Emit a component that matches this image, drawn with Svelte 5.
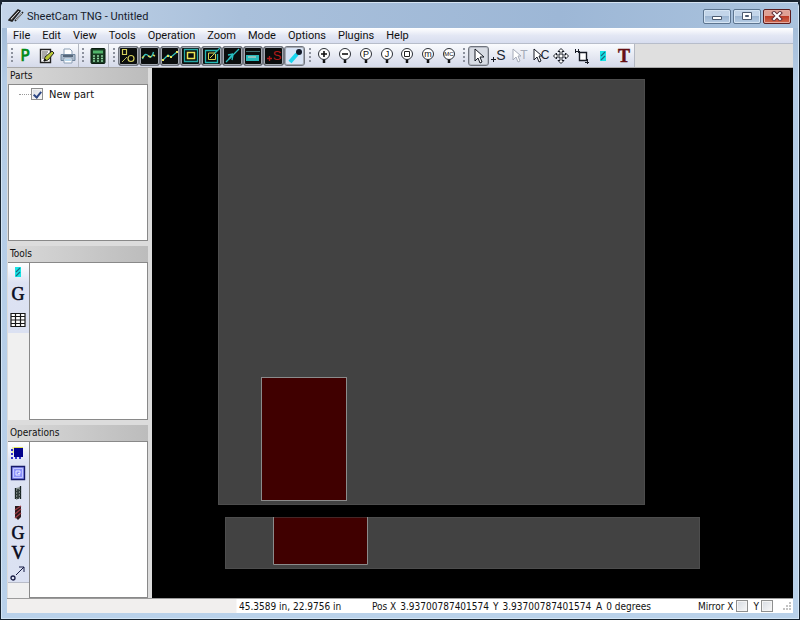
<script>
  let mirrorX = $state(false);
  let mirrorY = $state(false);
  let partOn = $state(true);
  let mode = $state('select');

  const menus = ['File', 'Edit', 'View', 'Tools', 'Operation', 'Zoom', 'Mode', 'Options', 'Plugins', 'Help'];

  const views = $state([
    { name: 'shapes', on: true },
    { name: 'path', on: true },
    { name: 'segments', on: true },
    { name: 'outline', on: true },
    { name: 'contour', on: true },
    { name: 'rapid', on: true },
    { name: 'material', on: true },
    { name: 'start', on: true },
    { name: 'torch', on: true },
  ]);

  const zooms = [
    { name: 'Zoom in', glyph: '+' },
    { name: 'Zoom out', glyph: '−' },
    { name: 'Zoom to part', glyph: 'P' },
    { name: 'Zoom to job', glyph: 'J' },
    { name: 'Zoom to window', glyph: '' },
    { name: 'Zoom to machine', glyph: 'm' },
    { name: 'Zoom to cut', glyph: 'MC' },
  ];

  const modes = ['select', 'startpoint', 'tabs', 'contours', 'move', 'nest', 'tool', 'text'];
  const toolButtons = ['tool', 'code', 'table'];
  const operationButtons = ['offset', 'pocket', 'drill', 'tap', 'code', 'vcarve', 'move-to'];
</script>

{#snippet icon(name)}
  <svg class="icon" width="18" height="18" viewBox="0 0 18 18" fill="none" aria-hidden="true">
    {#if name === 'post'}
      <text x="8" y="14" text-anchor="middle" font-family="DejaVu Sans, sans-serif" font-size="15" fill="#008a18" stroke="#008a18" stroke-width=".7">P</text>
    {:else if name === 'notes'}
      <path d="M2.500 2.500h10v13h-10z" fill="#fff" stroke="#222" stroke-width="1.400" />
      <path d="M4 5h6M4 7h5M4 9h4M4 11h2" stroke="#555" />
      <path d="M6 14l1-4 7-6 2 2-6 7z" fill="#b8c735" stroke="#222" />
      <path d="M6 14l2-1-1-1z" fill="#111" stroke="#111" />
    {:else if name === 'print'}
      <path d="M5 7V2h6l2 2v3" fill="#fff" stroke="#8b9fb5" />
      <path d="M2 7.500h14v6H2z" fill="#aab9ca" stroke="#71869d" />
      <path d="M4 9h10" stroke="#56677a" stroke-width="2" />
      <path d="M5 11h8v5H5z" fill="#fff" stroke="#8b9fb5" />
      <path d="M6 13h6" stroke="#6aabd5" />
    {:else if name === 'calc'}
      <rect x="2" y="1.500" width="14" height="15" rx="1" fill="#183a22" stroke="#0b1d10" />
      <path d="M4 3.500h10v3H4z" fill="#51b36a" />
      <path d="M4 9h2m2 0h2m2 0h2M4 11.500h2m2 0h2m2 0h2M4 14h2m2 0h2m2 0h2" stroke="#91d7a4" stroke-width="1.500" />
    {:else if name === 'shapes'}
      <path d="M3.500 2.500h4v5h-4z" stroke="#d5d05b" stroke-width="1.200" />
      <circle cx="12" cy="11.500" r="3" stroke="#d5d05b" stroke-width="1.200" />
      <path d="M3 15l5-5" stroke="#b5b45b" />
    {:else if name === 'path'}
      <path d="M2.500 12c2-6 4-5 6-3s4 1 5-4" stroke="#37c4bd" stroke-width="1.300" />
      <path d="M2 11l2-2M8 9l3 1M13 8l2 1" stroke="#d7d35a" stroke-width="1.400" />
    {:else if name === 'segments'}
      <path d="M2 13l5-5 3 2 6-5" stroke="#37c4bd" stroke-width="1.300" />
      <path d="M1 13h2M6 9h2m1 1h2m4-5h2" stroke="#e7e35a" stroke-width="2" />
    {:else if name === 'outline'}
      <path d="M2.500 2.500h13v12h-13z" stroke="#25a7a5" stroke-width="1.300" />
      <path d="M5.500 5.500h7v6h-7z" stroke="#ece353" stroke-width="1.500" />
    {:else if name === 'contour'}
      <path d="M14 3.500H2.500v12h12V7M11 7l6-6" stroke="#25b7b5" stroke-width="1.300" />
      <path d="M12 6H5.500v6.500h7V7M7 11l4-4" stroke="#d7d052" />
    {:else if name === 'rapid'}
      <path d="M3 15L16 2M5 8l5-1M10 8l-1 5" stroke="#28bec0" stroke-width="1.300" />
      <path d="M6 12l4-5" stroke="#28bec0" stroke-width="2" />
    {:else if name === 'material'}
      <path d="M2 4.500h14" stroke="#3f6e70" />
      <path d="M2 8h13v6H2z" fill="#27b9ba" />
      <path d="M4 9h8v2H4z" fill="#8ac4bd" />
    {:else if name === 'start'}
      <path d="M2 11.500h5M4.500 9v5" stroke="#b31919" stroke-width="1.300" />
      <text x="12" y="13" text-anchor="middle" font-family="Liberation Sans, sans-serif" font-size="13" fill="#b31919">S</text>
    {:else if name === 'torch'}
      <path d="M4 15l7-8" stroke="#19d5ee" stroke-width="4" />
      <circle cx="13" cy="5" r="3" fill="#111827" />
    {:else if name === 'select' || name === 'tabs' || name === 'contours'}
      <path
        d={name === 'select' ? 'M6 2v12l3-3 2 5 2-1-2-5h4z' : 'M2 2v11l3-3 2 5 2-1-2-5h3z'}
        fill="#fff"
        stroke={name === 'tabs' ? '#a5abb8' : '#171b24'}
      />
      {#if name !== 'select'}
        <text x="13" y="12" text-anchor="middle" font-family="Liberation Sans, sans-serif" font-size="12" fill={name === 'tabs' ? '#a5abb8' : '#202632'}>{name === 'tabs' ? 'T' : 'C'}</text>
      {/if}
    {:else if name === 'startpoint'}
      <path d="M1 12.500h5M3.500 10v5" stroke="#171b24" />
      <text x="11" y="13" text-anchor="middle" font-family="Liberation Sans, sans-serif" font-size="14" fill="#202632">S</text>
    {:else if name === 'move'}
      <path d="M9 1.500l3 3h-2v3.500h3.500V6l3 3-3 3v-2H10v3.500h2l-3 3-3-3h2V10H4.500v2l-3-3 3-3v2H8V4.500H6z" fill="#fff" stroke="#171b24" />
    {:else if name === 'nest'}
      <path d="M6.500 5.500h7v8h-7z" fill="#fff" stroke="#171b24" stroke-width="1.400" />
      <path d="M2 4.500h5M5.500 2v4M2.500 2v4M12 15.500h4M14.500 12v5" stroke="#171b24" />
    {:else if name === 'tool'}
      <path d="M6 4h6v10H6z" fill="#16e3e5" />
      <path d="M7 9l4-4M7 13l4-4" stroke="#176b80" stroke-width="1.200" />
    {:else if name === 'text'}
      <text x="9" y="15" text-anchor="middle" font-family="Liberation Serif, serif" font-size="18" font-weight="700" fill="#651014" stroke="#651014" stroke-width=".5">T</text>
    {:else if name === 'code' || name === 'vcarve'}
      <text x="9" y="15" text-anchor="middle" font-family="Liberation Serif, serif" font-size="18" fill="#080a20" stroke="#080a20" stroke-width=".6">{name === 'code' ? 'G' : 'V'}</text>
    {:else if name === 'table'}
      <path d="M2 2.500h14v13H2zM2 5.500h14M2 9h14M2 12.500h14M6.500 3v12M11.500 3v12" fill="#fff" stroke="#181818" stroke-width="1.200" />
    {:else if name === 'offset'}
      <path d="M5 4h9v9H5z" fill="#02028c" />
      <path d="M4 3v6M5 3.500h9" stroke="#e4e45a" />
      <path d="M3 5v9h11" stroke="#3434cc" stroke-width="2" stroke-dasharray="2 2" />
    {:else if name === 'pocket'}
      <path d="M2.500 2.500h13v13h-13z" fill="#8c92fa" stroke="#161a68" stroke-width="1.400" />
      <path d="M4.500 4.500h9v9h-9z" stroke="#c3c8ff" />
      <path d="M11 11H7V7h4v2.500H9" stroke="#e8eaff" />
    {:else if name === 'drill'}
      <path d="M7 4l4-1v11l-4 2z" fill="#87918f" />
      <path d="M6.500 4v11M11.500 2v13M9 5v10" stroke="#152020" stroke-width="1.300" />
      <path d="M6 8l6-2M6 11l6-2M6 14l6-2" stroke="#2c3838" />
    {:else if name === 'tap'}
      <path d="M6 2h6v11l-3 3-3-3z" fill="#28181c" />
      <path d="M6 6l6-4M6 10l6-5M6 14l6-5" stroke="#9a3944" stroke-width="1.400" />
    {:else if name === 'move-to'}
      <circle cx="4" cy="14" r="2" stroke="#171b44" stroke-width="1.300" />
      <path d="M7 11l8-8M10 3h5v5" stroke="#171b44" />
    {/if}
  </svg>
{/snippet}

{#snippet zoomIcon(glyph)}
  <svg class="icon" width="18" height="18" viewBox="0 0 18 18" fill="none" aria-hidden="true">
    <path d="M9 12v4" stroke="#111" stroke-width="2.500" />
    <circle cx="9" cy="7" r="5.500" fill="#fff" stroke="#2a2e36" />
    {#if glyph === '+'}
      <path d="M6 7h6M9 4v6" stroke="#111" stroke-width="1.600" />
    {:else if glyph === '−'}
      <path d="M6 7h6" stroke="#111" stroke-width="1.600" />
    {:else if glyph === ''}
      <path d="M6.500 4.500h5v5h-5z" stroke="#222" />
    {:else}
      <text x="9" y={glyph === 'MC' ? 9 : 10} text-anchor="middle" font-family="Liberation Sans, sans-serif" font-size={glyph === 'MC' ? 6 : 9} fill="#111">{glyph}</text>
    {/if}
  </svg>
{/snippet}

<div class="window">
  <header class="title">
    <svg width="16" height="16" viewBox="0 0 16 16" aria-hidden="true">
      <path d="M1 13L10 3l2 1L4 14zM7 14l8-9" fill="#777" stroke="#222" stroke-width="1.500" />
      <path d="M3 12l8-8m-3 9l6-7" stroke="#ccc" />
    </svg>
    <h1>SheetCam TNG - Untitled</h1>
    <div class="caption-buttons">
      <button aria-label="Minimize">
        <svg width="12" height="10" viewBox="0 0 12 10"><path d="M1.500 5.500h9v3h-9z" fill="#fff" stroke="#4c5b70" /></svg>
      </button>
      <button aria-label="Maximize">
        <svg width="12" height="10" viewBox="0 0 12 10"><path d="M1.500 1.500h9v7h-9z" fill="#fff" stroke="#4c5b70" /><path d="M4.500 4.500h3v1h-3z" fill="#8ba6c4" stroke="#4c5b70" /></svg>
      </button>
      <button class="close" aria-label="Close">
        <svg width="12" height="10" viewBox="0 0 12 10"><path d="M3 2l6 6m0-6L3 8" stroke="#62303a" stroke-width="4" stroke-linecap="square" /><path d="M3 2l6 6m0-6L3 8" stroke="#fff" stroke-width="2" stroke-linecap="square" /></svg>
      </button>
    </div>
  </header>

  <div class="client">
    <nav>
      {#each menus as menu}
        <button>{menu}</button>
      {/each}
    </nav>

    <div class="toolbars">
      <div class="bar file">
        <span class="grip"></span>
        <button aria-label="Run post processor">{@render icon('post')}</button>
        <button aria-label="Notes">{@render icon('notes')}</button>
        <button aria-label="Print">{@render icon('print')}</button>
      </div>
      <div class="bar calc">
        <span class="grip"></span>
        <button aria-label="Calculator">{@render icon('calc')}</button>
      </div>
      <div class="bar views">
        <span class="grip"></span>
        {#each views as view}
          <button
            class="toggle"
            class:light={view.name === 'torch'}
            class:off={!view.on}
            aria-label={view.name}
            aria-pressed={view.on}
            onclick={() => (view.on = !view.on)}
          >{@render icon(view.name)}</button>
        {/each}
      </div>
      <div class="bar zooms">
        <span class="grip"></span>
        {#each zooms as zoom}
          <button aria-label={zoom.name}>{@render zoomIcon(zoom.glyph)}</button>
        {/each}
      </div>
      <div class="bar modes">
        <span class="grip"></span>
        {#each modes as item}
          <button class:active={mode === item} aria-label={item} onclick={() => (mode = item)}>{@render icon(item)}</button>
        {/each}
      </div>
    </div>

    <main>
      <aside>
        <section>
          <h2>Parts</h2>
          <div class="list">
            <label class="part">
              <span class="branch"></span>
              <input type="checkbox" bind:checked={partOn} />
              New part
            </label>
          </div>
        </section>
        <section>
          <h2>Tools</h2>
          <div class="split">
            <div class="rail">
              <div class="strip tools">
                {#each toolButtons as name}
                  <button aria-label={name}>{@render icon(name)}</button>
                {/each}
              </div>
            </div>
            <div class="list"></div>
          </div>
        </section>
        <section>
          <h2>Operations</h2>
          <div class="split">
            <div class="rail">
              <div class="strip operations">
                {#each operationButtons as name}
                  <button aria-label={name}>{@render icon(name)}</button>
                {/each}
              </div>
            </div>
            <div class="list"></div>
          </div>
        </section>
      </aside>

      <div class="canvas">
        <svg viewBox="0 0 641 530" preserveAspectRatio="xMinYMin meet" role="img" aria-label="Machine table, top and side view">
          <rect x="66.500" y="11.500" width="426" height="425" fill="#424242" stroke="#4d4d4d" />
          <rect x="109.500" y="309.500" width="85" height="123" fill="#400000" stroke="#8b8b8b" />
          <rect x="73.500" y="449.500" width="474" height="51" fill="#424242" stroke="#4d4d4d" />
          <rect x="121.500" y="449.500" width="94" height="47" fill="#400000" />
          <path d="M121.500 449v47.500h94V449" fill="none" stroke="#8b8b8b" />
        </svg>
      </div>
    </main>

    <footer>
      <span class="cursor">45.3589 in, 22.9756 in</span>
      <span class="pos-x"><span>Pos X</span> <output>3.93700787401574</output></span>
      <span class="pos-y"><span>Y</span> <output>3.93700787401574</output></span>
      <span class="angle"><span>A</span> <output>0 degrees</output></span>
      <span class="mirror">
        <label>Mirror X <input type="checkbox" bind:checked={mirrorX} /></label>
        <label>Y <input type="checkbox" bind:checked={mirrorY} /></label>
      </span>
      <svg class="size-grip" width="9" height="9" viewBox="0 0 9 9" aria-hidden="true">
        <path d="M7 1h2M4 4h2m1 0h2M1 7h2m1 0h2m1 0h2" stroke="#c3c3c3" stroke-width="2" />
      </svg>
    </footer>
  </div>
</div>

<style>
  :global(body) {
    margin: 0;
    background: #1c2733;
  }

  .window {
    box-sizing: border-box;
    display: flex;
    flex-direction: column;
    height: 100vh;
    padding: 0 6px 6px;
    border: 1px solid #17232f;
    border-top-width: 2px;
    border-radius: 6px 6px 0 0;
    background: linear-gradient(#9db6d3, #b4cce6 80px, #b9d1ea);
    box-shadow: inset 0 0 0 1px #d3e5f5;
    font-family: "DejaVu Sans Condensed", "DejaVu Sans", sans-serif;
    font-size: 10px;
    color: #111;
  }

  button {
    margin: 0;
    padding: 0;
    border: 0;
    background: none;
    font: inherit;
    color: inherit;
  }

  input {
    margin: 0;
  }

  .title {
    display: flex;
    align-items: center;
    height: 26px;
    flex: none;
    margin: 0 -5px;
    padding: 0 6px;
    background: linear-gradient(90deg, #c4d5e9, #a9c0db 30%, #9db7d6 70%, #aac3de);
    box-shadow: inset 0 1px #d5e3f2;
  }

  h1 {
    margin: 3px 0 0 3px;
    font-family: Roboto, sans-serif;
    font-size: 11px;
    font-weight: 400;
    line-height: 16px;
    color: #16202c;
  }

  .caption-buttons {
    display: flex;
    gap: 2px;
    margin: 2px 1px 0 auto;
  }

  .caption-buttons button {
    box-sizing: border-box;
    display: grid;
    place-items: center;
    width: 28px;
    height: 15px;
    border: 1px solid #5d7590;
    border-radius: 2px;
    background: linear-gradient(#c3d5e9 45%, #9db6d2 50%, #b7cee6);
    box-shadow: inset 0 0 0 1px #d5e4f3;
  }

  .caption-buttons .close {
    border-color: #5c1e20;
    background: linear-gradient(#dfa094 45%, #bd3b26 50%, #cf6a50);
    box-shadow: inset 0 0 0 1px #e4aaa0;
  }

  .client {
    display: flex;
    flex-direction: column;
    flex: 1;
    min-height: 0;
    background: #f0f0f0;
  }

  nav {
    display: flex;
    flex: none;
    height: 15px;
    border-bottom: 1px solid #b7bdca;
    background: linear-gradient(#fff, #e3e7f4 50%, #d7ddef);
  }

  nav button {
    padding: 0 6px;
    font-family: Roboto, sans-serif;
    font-size: 11px;
    line-height: 16px;
  }

  .toolbars {
    display: flex;
    flex: none;
    height: 23px;
    padding-left: 1px;
    background: #dfdfdf;
    border-bottom: 1px solid #a8a8a8;
  }

  .bar {
    box-sizing: border-box;
    display: flex;
    align-items: center;
    border-right: 1px solid #b4b8c2;
    background: linear-gradient(#fafbfe, #e5e8f2 55%, #d5daea);
  }

  .bar.file { width: 71px; }
  .bar.calc { width: 30px; }
  .bar.views { width: 197px; padding-left: 1px; }
  .bar.zooms { width: 154px; }
  .bar.modes { width: 175px; }

  .bar.views, .bar.zooms {
    border-right-color: transparent;
  }

  .grip {
    flex: none;
    width: 2px;
    height: 15px;
    margin: 0 3px;
    background: repeating-linear-gradient(#8d929e 0 2px, transparent 2px 4px);
  }

  .bar button {
    box-sizing: border-box;
    display: grid;
    place-items: center;
    flex: 1;
    min-width: 0;
    height: 20px;
    border: 1px solid transparent;
    border-radius: 3px;
  }

  .bar .toggle {
    border: 1px solid #70757f;
    background: #0a0d0d;
    box-shadow: inset 0 0 0 1px #a4a9b2;
  }

  .bar .toggle.light {
    background: #d7e3f5;
  }

  .bar .toggle.off {
    opacity: 0.5;
  }

  .bar .active {
    border-color: #6f747e;
    background: #d8dce4;
    box-shadow: inset 0 0 0 1px #b6bac4;
  }

  .icon {
    display: block;
    overflow: visible;
  }

  main {
    display: flex;
    flex: 1;
    min-height: 0;
    background: #dcdcdc;
  }

  aside {
    display: grid;
    grid-template-rows: repeat(3, 1fr);
    gap: 5px;
    flex: none;
    width: 140px;
    margin: 0 4px 0 1px;
  }

  section {
    display: flex;
    flex-direction: column;
    min-height: 0;
  }

  h2 {
    flex: none;
    height: 16px;
    margin: 0;
    padding-left: 2px;
    background: linear-gradient(90deg, #d9d9d9, #bcbcbc);
    font-size: 10px;
    font-weight: 400;
    line-height: 16px;
  }

  .split {
    display: flex;
    flex: 1;
    min-height: 0;
  }

  .list {
    flex: 1;
    border: 1px solid #898989;
    background: #fff;
  }

  .rail {
    width: 21px;
    flex: none;
    background: #f0f0f0;
    border-top: 1px solid #898989;
  }

  .strip {
    display: flex;
    flex-direction: column;
    align-items: center;
    padding-right: 2px;
    background: linear-gradient(#fff, #dde3f3 20px, #dbe1f2);
  }

  .strip.tools {
    gap: 4px;
    padding-bottom: 4px;
  }

  .strip.tools button:last-child {
    margin-top: 4px;
  }

  .strip.operations {
    gap: 2px;
    padding-top: 2px;
    border-bottom: 1px solid #b8bcc8;
  }

  .part {
    display: flex;
    align-items: center;
    height: 18px;
    padding-left: 10px;
    font-size: 11px;
  }

  .branch {
    width: 12px;
    border-top: 1px dotted #999;
  }

  input[type="checkbox"] {
    box-sizing: border-box;
    display: grid;
    place-items: center;
    appearance: none;
    width: 12px;
    height: 12px;
    border: 1px solid #8e8f8f;
    background: linear-gradient(135deg, #d6dbe2, #f8f8f8);
    box-shadow: inset 0 0 0 1px #f4f4f4;
  }

  input[type="checkbox"]:checked::before {
    content: "";
    width: 3px;
    height: 6px;
    border: solid #2c4684;
    border-width: 0 2px 2px 0;
    transform: rotate(40deg);
  }

  .part input {
    margin-right: 6px;
  }

  .canvas {
    flex: 1;
    min-width: 0;
    background: #000;
  }

  .canvas svg {
    display: block;
    width: 100%;
    height: 100%;
  }

  footer {
    display: flex;
    align-items: center;
    flex: none;
    height: 14px;
    border-top: 1px solid #9b9b9b;
    background: linear-gradient(90deg, #f1efee 229px, #fff 230px);
    white-space: nowrap;
  }

  footer > span, label {
    display: flex;
    align-items: center;
  }

  .cursor {
    width: 133px;
    margin-left: 232px;
  }

  .pos-x, .pos-y, .angle {
    gap: 4px;
  }

  .pos-x { width: 121px; }
  .pos-y { width: 103px; }

  .mirror {
    gap: 6px;
    margin-left: auto;
  }

  .mirror label {
    gap: 2px;
  }

  .size-grip {
    margin: 0 2px 0 9px;
  }
</style>
